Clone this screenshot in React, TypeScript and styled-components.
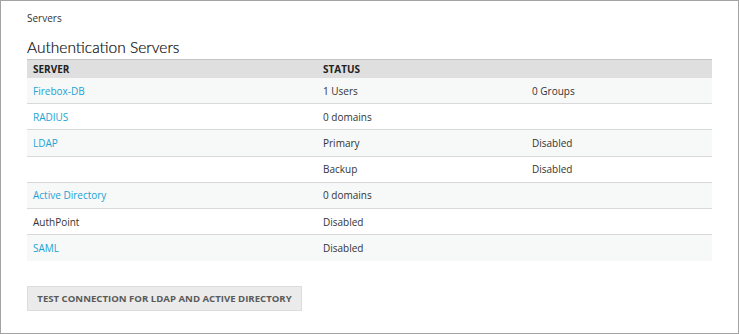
import React from "react";
import styled, { createGlobalStyle } from "styled-components";

const Global = createGlobalStyle`
  html, body { margin: 0; padding: 0; background: #fff; }
  body { font-family: "Open Sans", "Liberation Sans", sans-serif; }
  * { box-sizing: border-box; }
`;

const Frame = styled.div`
  width: 739px;
  height: 334px;
  border: 1px solid #a3a3a3;
  padding: 9px 26px 0 26px;
  display: flex;
  flex-direction: column;
`;

const Crumb = styled.div`
  font-size: 10px;
  color: #333;
  line-height: 16px;
`;

const Title = styled.h2`
  margin: 11px 0 0 0;
  font-family: "Lato", "Open Sans", sans-serif;
  font-weight: 300;
  font-size: 15.5px;
  line-height: 20px;
  color: #0d0d0d;
  -webkit-text-stroke: 0.2px #0d0d0d;
`;

const Table = styled.div`
  margin-top: 2px;
  width: 685px;
  display: flex;
  flex-direction: column;
`;

const Row = styled.div<{ $striped?: boolean; $head?: boolean; $last?: boolean }>`
  display: grid;
  grid-template-columns: 290px 209px 1fr;
  align-items: center;
  height: ${(p) => (p.$head ? "19px" : "26.2px")};
  padding-left: 6px;
  background: ${(p) => (p.$head ? "#dfdfdf" : p.$striped ? "#f7f8f8" : "#fff")};
  border-top: ${(p) => (p.$head ? "1px solid #c4c4c4" : "none")};
  border-bottom: ${(p) => (p.$last || p.$head ? "none" : "1px solid #d9d9d9")};
  font-size: 10px;
  color: #333;
`;

const HeadCell = styled.div`
  font-weight: 700;
  font-size: 10px;
  color: #222;
`;

const Cell = styled.div``;

const Link = styled.a`
  color: #1ba3d6;
  text-decoration: none;
  cursor: pointer;
`;

const Button = styled.button`
  margin-top: 25px;
  align-self: flex-start;
  width: 275px;
  height: 25px;
  background: #ebebeb;
  border: 1px solid #dcdcdc;
  font-family: "Open Sans", "Liberation Sans", sans-serif;
  font-weight: 700;
  font-size: 9.6px;
  color: #5a5a5a;
  padding: 0;
`;

type R = { name: string; link: boolean; status: string; extra?: string };

const rows: R[] = [
  { name: "Firebox-DB", link: true, status: "1 Users", extra: "0 Groups" },
  { name: "RADIUS", link: true, status: "0 domains" },
  { name: "LDAP", link: true, status: "Primary", extra: "Disabled" },
  { name: "", link: false, status: "Backup", extra: "Disabled" },
  { name: "Active Directory", link: true, status: "0 domains" },
  { name: "AuthPoint", link: false, status: "Disabled" },
  { name: "SAML", link: true, status: "Disabled" },
];

export default function App() {
  return (
    <>
      <Global />
      <Frame>
        <Crumb>Servers</Crumb>
        <Title>Authentication Servers</Title>
        <Table>
          <Row $head>
            <HeadCell>SERVER</HeadCell>
            <HeadCell>STATUS</HeadCell>
            <HeadCell />
          </Row>
          {rows.map((r, i) => (
            <Row key={i} $striped={i % 2 === 0} $last={i === rows.length - 1}>
              <Cell>{r.link ? <Link>{r.name}</Link> : r.name}</Cell>
              <Cell>{r.status}</Cell>
              <Cell>{r.extra ?? ""}</Cell>
            </Row>
          ))}
        </Table>
        <Button>TEST CONNECTION FOR LDAP AND ACTIVE DIRECTORY</Button>
      </Frame>
    </>
  );
}
